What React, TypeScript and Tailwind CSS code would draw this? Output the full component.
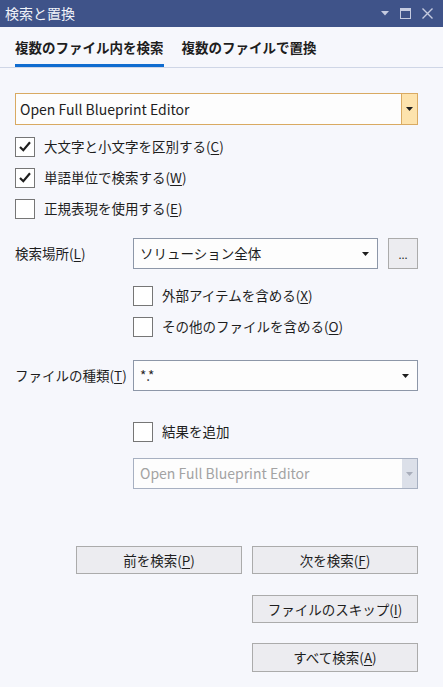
import React from 'react';

const font = { fontFamily: '"Noto Sans CJK JP", "Noto Sans", sans-serif' };

function Key({ k }: { k: string }) {
  return (
    <>
      (<span className="underline underline-offset-2">{k}</span>)
    </>
  );
}

function Caret({ color = '#1e1e1e' }: { color?: string }) {
  return (
    <svg width="7" height="4" viewBox="0 0 7 4">
      <path d="M0 0 H7 L3.5 4 Z" fill={color} />
    </svg>
  );
}

function CheckBox({ checked, children }: { checked?: boolean; children: React.ReactNode }) {
  return (
    <div className="h-[31px] flex items-center gap-[9px]">
      <div className="w-[20px] h-[20px] border border-[#767676] bg-white flex items-center justify-center">
        {checked && (
          <svg width="12" height="11" viewBox="0 0 12 11">
            <path d="M1 6 L4.3 9.2 L11 1.2" stroke="#1e1e1e" strokeWidth="2.2" fill="none" />
          </svg>
        )}
      </div>
      <span className="text-[13.5px] text-[#1e1e1e]">{children}</span>
    </div>
  );
}

function Select({ value, className = '' }: { value: string; className?: string }) {
  return (
    <div className={`h-[31px] border border-[#8d97a8] bg-[#fdfdfd] flex items-center justify-between pl-[6px] pr-[8px] ${className}`}>
      <span className="text-[13.5px] text-[#1e1e1e]">{value}</span>
      <Caret />
    </div>
  );
}

function Btn({ children, className = '' }: { children: React.ReactNode; className?: string }) {
  return (
    <div className={`w-[166px] h-[28px] border border-[#ababab] bg-[#ececf0] flex items-center justify-center text-[13.5px] text-[#1e1e1e] ${className}`}>
      {children}
    </div>
  );
}

export default function App() {
  return (
    <div className="w-[443px] h-[687px] bg-[#f6f7fc] flex flex-col overflow-hidden" style={font}>
      {/* title bar */}
      <div className="h-[27px] bg-[#3f5389] flex items-center justify-between pl-[5px] pr-[10px]">
        <span className="text-[14px] text-[#f0f2f8]">検索と置換</span>
        <div className="flex items-center gap-[11px]">
          <svg width="8" height="5" viewBox="0 0 8 5">
            <path d="M0 0 H8 L4 4.5 Z" fill="#c5cbe0" />
          </svg>
          <svg width="11" height="11" viewBox="0 0 11 11">
            <rect x="0.5" y="0.5" width="10" height="10" fill="none" stroke="#c5cbe0" />
            <rect x="0" y="0" width="11" height="3" fill="#c5cbe0" />
          </svg>
          <svg width="11" height="11" viewBox="0 0 11 11">
            <path d="M0.5 0.5 L10.5 10.5 M10.5 0.5 L0.5 10.5" stroke="#c5cbe0" strokeWidth="1.4" />
          </svg>
        </div>
      </div>

      {/* tabs */}
      <div className="h-[41px] border-b border-[#cfd6e6] flex items-end pl-[15px] gap-[18px]">
        <div className="h-full flex flex-col justify-between">
          <span className="pt-[10px] text-[13.5px] font-bold text-[#1e1e1e]">複数のファイル内を検索</span>
          <div className="h-[3px] bg-[#0f6cd0]" />
        </div>
        <div className="h-full flex flex-col">
          <span className="pt-[10px] text-[13.5px] font-bold text-[#1e1e1e]">複数のファイルで置換</span>
        </div>
      </div>

      <div className="flex flex-col pl-[15px] pr-[25px]">
        {/* focused combo */}
        <div className="mt-[25px] h-[32px] border border-[#d9aa62] bg-[#fdfdfd] flex items-stretch">
          <span className="flex-1 flex items-center pl-[4px] text-[14px] text-[#1e1e1e]">Open Full Blueprint Editor</span>
          <div className="w-[16px] border-l border-[#d9aa62] bg-[#fde3ad] flex items-center justify-center">
            <Caret />
          </div>
        </div>

        <div className="mt-[6px] flex flex-col">
          <CheckBox checked>大文字と小文字を区別する<Key k="C" /></CheckBox>
          <CheckBox checked>単語単位で検索する<Key k="W" /></CheckBox>
          <CheckBox>正規表現を使用する<Key k="E" /></CheckBox>
        </div>

        {/* search location */}
        <div className="mt-[14px] flex items-center">
          <span className="w-[118px] text-[13.5px] text-[#1e1e1e]">検索場所<Key k="L" /></span>
          <Select value="ソリューション全体" className="w-[245px]" />
          <div className="ml-[10px] w-[30px] h-[31px] border border-[#ababab] bg-[#ececf0] flex items-end justify-center pb-[8px] text-[11px] leading-none text-[#1e1e1e]">...</div>
        </div>

        <div className="mt-[11px] ml-[118px] flex flex-col">
          <CheckBox>外部アイテムを含める<Key k="X" /></CheckBox>
          <CheckBox>その他のファイルを含める<Key k="O" /></CheckBox>
        </div>

        {/* file types */}
        <div className="mt-[18px] flex items-center">
          <span className="w-[118px] text-[13.5px] text-[#1e1e1e]">ファイルの種類<Key k="T" /></span>
          <Select value="*.*" className="flex-1" />
        </div>

        <div className="mt-[25px] ml-[118px] flex flex-col">
          <CheckBox>結果を追加</CheckBox>
          <div className="mt-[11px] h-[31px] border border-[#a7b0c1] bg-[#fdfdfd] flex items-stretch">
            <span className="flex-1 flex items-center pl-[6px] text-[14px] text-[#a3a3a3]">Open Full Blueprint Editor</span>
            <div className="w-[15px] bg-[#dce0e9] flex items-center justify-center">
              <Caret color="#a9aebb" />
            </div>
          </div>
        </div>

        {/* buttons */}
        <div className="mt-[57px] flex justify-end gap-[10px]">
          <Btn>前を検索<Key k="P" /></Btn>
          <Btn>次を検索<Key k="F" /></Btn>
        </div>
        <div className="mt-[21px] flex justify-end">
          <Btn>ファイルのスキップ<Key k="I" /></Btn>
        </div>
        <div className="mt-[20px] flex justify-end">
          <Btn className="h-[29px]">すべて検索<Key k="A" /></Btn>
        </div>
      </div>
    </div>
  );
}
